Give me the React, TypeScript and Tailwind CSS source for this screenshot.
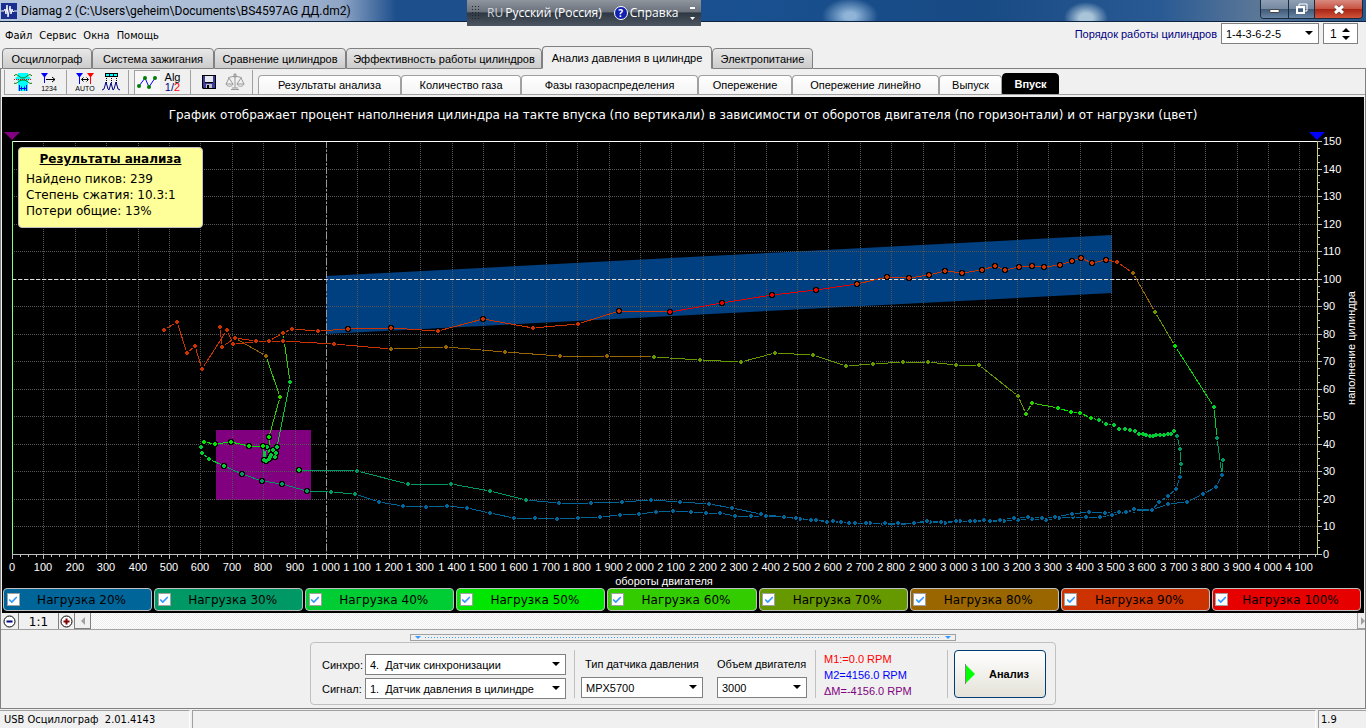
import { useState } from 'react'
import type { ReactNode } from 'react'
import { Check } from 'lucide-react'

type Point = [number, number]

interface Trace {
  color: string
  points: Point[]
}

// Load colours, 20% to 100%
const L20 = '#006699'
const L30 = '#009966'
const L40 = '#00cc33'
const L50 = '#00e600'
const L60 = '#33cc00'
const L70 = '#669900'
const L80 = '#996600'
const L90 = '#cc3300'
const L100 = '#e60000'

const loads = [
  { value: 20, bg: 'bg-[#006699]' },
  { value: 30, bg: 'bg-[#009966]' },
  { value: 40, bg: 'bg-[#00cc33]' },
  { value: 50, bg: 'bg-[#00e600]' },
  { value: 60, bg: 'bg-[#33cc00]' },
  { value: 70, bg: 'bg-[#669900]' },
  { value: 80, bg: 'bg-[#996600]' },
  { value: 90, bg: 'bg-[#cc3300]' },
  { value: 100, bg: 'bg-[#e60000]' },
]

// Neighbouring traces share a point, the later one gives it its colour
const traces: Trace[] = [
  { color: L60, points: [[266, 356], [280, 397], [269, 437]] },
  { color: L50, points: [[269, 437], [270, 458]] },
  { color: L80, points: [[235, 338], [266, 356]] },
  { color: L60, points: [[283, 333], [290, 382]] },
  { color: L40, points: [[290, 382], [277, 447], [270, 457], [267, 447], [264, 460], [263, 446], [266, 461], [273, 450], [276, 453], [271, 455], [275, 457], [269, 459]] },
  { color: L90, points: [[164, 330], [177, 322], [187, 353], [195, 346], [202, 369], [227, 330], [233, 344], [269, 341], [283, 333], [292, 329], [318, 331], [348, 329], [391, 328], [438, 331], [483, 319], [533, 328], [578, 324], [619, 311], [670, 312]] },
  { color: L100, points: [[670, 312], [722, 303], [772, 295], [816, 290], [857, 284]] },
  { color: L90, points: [[857, 284], [887, 277], [909, 278], [929, 275], [945, 271], [962, 273], [982, 270], [995, 266], [1005, 270], [1019, 267], [1032, 266], [1044, 267], [1060, 265], [1072, 261], [1081, 258], [1092, 263], [1106, 260], [1117, 262], [1133, 273]] },
  { color: L80, points: [[1133, 273], [1155, 312]] },
  { color: L70, points: [[1155, 312], [1175, 346]] },
  { color: L50, points: [[1175, 346], [1214, 407]] },
  { color: L40, points: [[1214, 407], [1217, 438]] },
  { color: L30, points: [[1217, 438], [1222, 475], [1223, 460]] },
  { color: L20, points: [[1222, 475], [1216, 487], [1203, 494], [1187, 502], [1168, 504], [1152, 510], [1134, 511], [1112, 515], [1100, 517], [1086, 517], [1073, 517], [1059, 518], [1046, 520], [1032, 519], [1018, 520], [1004, 521], [990, 521], [975, 521], [960, 521], [945, 523], [930, 522], [914, 523], [898, 525], [883, 524], [870, 523], [855, 523], [841, 522], [827, 522], [816, 520], [800, 519], [784, 517], [761, 514], [732, 508], [709, 504], [680, 502], [651, 500], [622, 502], [591, 503], [559, 503], [526, 500]] },
  { color: L30, points: [[526, 500], [490, 491], [451, 484], [408, 484], [357, 471], [299, 470]] },
  { color: L40, points: [[299, 470]] },
  { color: L90, points: [[220, 327], [222, 347], [235, 338], [256, 341], [283, 341], [334, 344], [391, 349]] },
  { color: L80, points: [[391, 349], [446, 347], [505, 352], [560, 356], [607, 356], [654, 357]] },
  { color: L70, points: [[654, 357], [700, 360], [741, 362], [775, 353], [813, 355], [846, 366], [873, 364], [903, 362], [928, 362], [956, 365], [979, 365], [1018, 396], [1026, 414]] },
  { color: L60, points: [[1026, 414], [1032, 403], [1058, 408]] },
  { color: L50, points: [[1058, 408], [1071, 412], [1080, 413], [1091, 418], [1099, 420]] },
  { color: L40, points: [[1099, 420], [1106, 424], [1114, 425], [1119, 429], [1125, 429], [1130, 430], [1135, 431], [1139, 434], [1143, 434], [1146, 435], [1150, 436], [1153, 436], [1156, 435], [1160, 435], [1164, 435], [1168, 434], [1171, 434], [1174, 431], [1177, 436]] },
  { color: L30, points: [[1177, 436], [1180, 449], [1181, 464], [1180, 477]] },
  { color: L20, points: [[1180, 477], [1176, 489], [1168, 496], [1159, 502], [1152, 510], [1134, 509], [1126, 512], [1119, 512], [1105, 513], [1089, 512], [1072, 514], [1055, 517], [1042, 518], [1028, 517], [1014, 518], [1000, 520], [984, 520], [970, 521], [956, 521], [941, 522], [927, 521], [914, 523], [898, 523], [885, 523], [866, 523], [849, 523], [833, 521], [811, 520], [796, 518], [784, 517], [766, 516], [751, 516], [735, 516], [720, 513], [706, 513], [691, 512], [673, 511], [656, 512], [639, 514], [620, 515], [600, 517], [578, 518], [557, 519], [535, 518], [514, 518], [490, 513], [467, 508], [447, 506], [426, 507], [403, 506], [379, 502], [355, 494]] },
  { color: L30, points: [[355, 494], [331, 492], [307, 491], [282, 484], [262, 481], [242, 474], [224, 466]] },
  { color: L40, points: [[224, 466], [209, 459], [202, 453], [201, 447], [204, 442]] },
  { color: L50, points: [[204, 442], [215, 444], [231, 442], [249, 446], [263, 446]] },
]

const X0 = 12
const X1 = 1317
const Y0 = 554
const Y1 = 141
const MAX_RPM = 4156

const xOf = (rpm: number) => Math.round(X0 + (rpm / MAX_RPM) * (X1 - X0))
const yOf = (percent: number) => Math.round(Y0 - (percent / 150) * (Y0 - Y1))
const range = (count: number) => Array.from({ length: count }, (_, i) => i)
const rpmLabel = (rpm: number) =>
  rpm < 1000 ? String(rpm) : `${Math.floor(rpm / 1000)} ${String(rpm % 1000).padStart(3, '0')}`

function Chart() {
  return (
    <svg viewBox="2 131 1362 457" className="block h-auto w-full font-['Liberation_Sans',sans-serif] text-[11px]">
      {/* Reference areas */}
      <polygon points="326,276 1112,235 1112,293 326,334" fill="#004080" />
      <rect x="216" y="430" width="95" height="70" fill="#800080" />

      {/* Grid */}
      <g stroke="#555555" strokeDasharray="1 1" shapeRendering="crispEdges">
        {range(41).map(i => (
          <line key={i} x1={xOf((i + 1) * 100) + 0.5} x2={xOf((i + 1) * 100) + 0.5} y1={Y1} y2={Y0} />
        ))}
        {range(14).map(i => (
          <line key={i} x1={X0} x2={X1} y1={yOf((i + 1) * 10) + 0.5} y2={yOf((i + 1) * 10) + 0.5} />
        ))}
      </g>
      <g fill="none" shapeRendering="crispEdges">
        <path d={`M326.5 ${Y1}V${Y0}`} stroke="#999999" strokeDasharray="7 2 2 2" />
        <path d={`M${X0} 279.5H${X1}`} stroke="#e0e0e0" strokeDasharray="4 2" />
        <path d={`M${X0} 141.5H1322`} stroke="#ffffff" />
        <path d={`M${X0} 554.5H1322`} stroke="#c0c0c0" />
        <path d={`M12.5 ${Y1}V${Y0}`} stroke="#80ff80" />
        <path d={`M1317.5 ${Y1}V${Y0}`} stroke="#d0d060" />
      </g>

      {/* Ticks */}
      <g stroke="#c0c0c0" shapeRendering="crispEdges">
        {range(167).map(i => (
          <line key={i} x1={xOf(i * 25) + 0.5} x2={xOf(i * 25) + 0.5} y1={Y0} y2={i % 4 ? Y0 + 3 : Y0 + 5} />
        ))}
        {range(61).map(i => (
          <line key={i} x1={X1} x2={i % 4 ? X1 + 3 : X1 + 5} y1={yOf(i * 2.5) + 0.5} y2={yOf(i * 2.5) + 0.5} />
        ))}
      </g>

      {/* Markers */}
      <polygon points="4,132 20,132 12,140" fill="#800080" />
      <polygon points="1309,132 1325,132 1317,140" fill="#0000ff" />

      {/* Measured curves */}
      <g fill="none" shapeRendering="crispEdges">
        {traces.map((trace, i) => (
          <polyline key={i} points={trace.points.map(p => p.join(',')).join(' ')} stroke={trace.color} />
        ))}
      </g>
      <g stroke="#000000" strokeWidth="2" paintOrder="stroke" shapeRendering="crispEdges">
        {traces.map((trace, i) => (
          <path
            key={i}
            fill={trace.color}
            d={trace.points.map(([x, y]) => `M${x - 1} ${y - 2}h2v1h1v2h-1v1h-2v-1h-1v-2h1z`).join('')}
          />
        ))}
      </g>

      {/* Labels */}
      <g fill="#ffffff">
        {range(42).map(i => (
          <text key={i} x={xOf(i * 100)} y="571" textAnchor="middle">{rpmLabel(i * 100)}</text>
        ))}
        {range(16).map(i => (
          <text key={i} x="1323" y={yOf(i * 10) + 4}>{i * 10}</text>
        ))}
        <text x="664" y="585" textAnchor="middle">обороты двигателя</text>
        <text transform="translate(1355 348) rotate(-90)" textAnchor="middle">наполнение цилиндра</text>
      </g>
    </svg>
  )
}

function AppIcon() {
  return (
    <svg width="16" height="16" viewBox="0 0 16 16">
      <rect width="16" height="16" fill="#1a2f8f" />
      <path d="M0 8h3l1-2 1 5 1-9 1 12 2-11 1 8 1-5 1 3 1-1h3" fill="none" stroke="#ffffff" />
    </svg>
  )
}

function FilterIcon() {
  return (
    <svg width="20" height="20" viewBox="0 0 20 20" fill="none">
      <path d="M5 1h10v3l3 2-3 3v10H5V9L2 6l3-2z" fill="#00ffff" />
      <path d="M1 4c3-4 5 2 9 2s6-6 9-2M1 11c3 2 4-3 9-3s6 5 9 3" stroke="#008000" />
      <path d="M1 7.500h18" stroke="#ff0000" strokeDasharray="1 1" />
      <path d="M6.500 13v6M13.500 13v6" stroke="#0000ff" />
      <path d="M7 16.500h6M8.500 14.500v4M11.500 14.500v4" stroke="#0000ff" />
    </svg>
  )
}

function NumberIcon() {
  return (
    <svg width="20" height="20" viewBox="0 0 20 20" fill="none">
      <path d="M2 1h7L6 5v6H5V5z" fill="#0000ff" />
      <path d="M7 7.500h9M13 5l3 2.500-3 2.500" stroke="#000000" />
      <text x="10" y="19" textAnchor="middle" fill="#000000" className="font-['Liberation_Sans',sans-serif] text-[7px]">1234</text>
    </svg>
  )
}

function AutoIcon() {
  return (
    <svg width="20" height="20" viewBox="0 0 20 20" fill="none">
      <path d="M1 1h7L5 5v7H4V5z" fill="#0000ff" />
      <path d="M12 1h7l-3 4v7h-1V5z" fill="#ff0000" />
      <path d="M7 7.500h6M8.500 5.500l-2 2 2 2M11.500 5.500l2 2-2 2" stroke="#000000" />
      <text x="10" y="19" textAnchor="middle" fill="#000000" className="font-['Liberation_Sans',sans-serif] text-[7px]">AUTO</text>
    </svg>
  )
}

function PeaksIcon() {
  return (
    <svg width="20" height="20" viewBox="0 0 20 20" fill="none">
      <rect x="4.500" y="1.500" width="12" height="3" fill="#00ffff" stroke="#000000" />
      <path d="M8.500 1v4M12.500 1v4" stroke="#000000" />
      <path d="M5.500 6v5M10.500 6v5M15.500 6v5" stroke="#000000" strokeDasharray="1 1" />
      <path d="M1 18l2-1 2-7 2 7 1 1 2-7 2 7 1-1 2-7 2 7 2 1" stroke="#000080" />
    </svg>
  )
}

function PointsIcon() {
  return (
    <svg width="22" height="20" viewBox="0 0 22 20" fill="#008000">
      <path d="M3 14L9 6l4 9 6-9" fill="none" stroke="#0000ff" />
      <circle cx="3" cy="14" r="2" />
      <circle cx="9" cy="6" r="2" />
      <circle cx="13" cy="15" r="2" />
      <circle cx="19" cy="6" r="2" />
    </svg>
  )
}

function AlgorithmIcon() {
  return (
    <span className="flex flex-col text-center font-['Liberation_Sans',sans-serif] text-[11px] leading-[10px]">
      <span>Alg</span>
      <span><span className="text-[#000080]">1/</span><span className="text-[#ff0000]">2</span></span>
    </span>
  )
}

function SaveIcon() {
  return (
    <svg width="14" height="14" viewBox="0 0 14 14">
      <path d="M0 0h14v14H1l-1-1z" fill="#000000" />
      <path d="M1 1h2v7h8V1h2v12H2l-1-1z" fill="#3c3c9c" />
      <rect x="3" y="1" width="8" height="6" fill="#e8e8f0" />
      <rect x="4" y="9" width="6" height="4" fill="#c0c0c0" />
      <rect x="5" y="10" width="2" height="3" fill="#000000" />
    </svg>
  )
}

function ScalesIcon() {
  return (
    <svg width="20" height="18" viewBox="0 0 20 18" fill="none" stroke="#999999">
      <path d="M10 1v14M9 1h2v3H9zM3 5c3-2 11-2 14 0M4 5L1 11h7zM16 5l-4 6h7zM1 11c1 3 6 3 7 0M12 11c1 3 6 3 7 0M6 16.500h8M7 15h6" />
    </svg>
  )
}

function ToolButton({ title, pressed, children }: { title: string; pressed?: boolean; children: ReactNode }) {
  return (
    <button
      title={title}
      className={`flex h-6 w-[26px] items-center justify-center ${pressed ? 'border-t border-l border-[#a0a0a0] bg-[#f8f8f8]' : ''}`}
    >
      {children}
    </button>
  )
}

function ToolSeparator() {
  return <div className="h-6 w-px bg-[#a0a0a0]" />
}

function ToolGroup({ children }: { children: ReactNode }) {
  return <div className="flex w-[61px] justify-center">{children}</div>
}

interface SelectProps {
  id: string
  label: string
  value: string
  className: string
}

function SelectBox({ id, label, value, className }: SelectProps) {
  return (
    <div className={`relative ${className}`}>
      <select
        id={id}
        aria-label={label}
        className="block h-[21px] w-full appearance-none border border-[#808080] bg-white pl-1 text-black"
      >
        <option>{value}</option>
      </select>
      <svg width="8" height="4" viewBox="0 0 8 4" className="pointer-events-none absolute top-2 right-1.5">
        <polygon points="0,0 8,0 4,4" />
      </svg>
    </div>
  )
}

function TitleBar() {
  return (
    <header className="relative flex h-[22px] items-center border-b border-[#0d2440] bg-[radial-gradient(22px_16px_at_1086px_18px,#a9c4d8_30%,transparent),radial-gradient(28px_18px_at_850px_16px,#8fb4d8_20%,transparent),linear-gradient(90deg,#b5c5dc_0,#a9bad4_20%,#8fa5c6_25%,#1d4f8c_29%,#19508f_55%,#184a84_72%,#2a5a94_85%,#5b7797_92%,#27578c_100%)]">
      <div className="flex h-full w-[466px] items-center pl-px">
        <AppIcon />
        <h1 className="pl-1 font-['Roboto',sans-serif] text-[12px] whitespace-nowrap text-black">
          Diamag 2 (C:\Users\geheim\Documents\BS4597AG ДД.dm2)
        </h1>
      </div>

      {/* Language bar floats over the window */}
      <div className="absolute top-0 left-[467px] z-10 flex h-[26px] w-[234px] items-center bg-[linear-gradient(#8f959d_0,#6b727c_45%,#2e3843_50%,#4d5660_100%)] pl-1 font-['Open_Sans',sans-serif] text-[12px] text-white">
        <div className="mr-2 h-4 w-2 bg-[radial-gradient(#20262d_1px,transparent_1px)] bg-[length:3px_3px]" />
        <span className="text-[#d0d4d8]">RU</span>
        <span className="ml-0.5 font-medium whitespace-nowrap">Русский (Россия)</span>
        <button className="ml-3 flex items-center gap-0.5 font-medium">
          <span className="flex size-[14px] items-center justify-center rounded-full border border-white bg-[#1020b0] text-[10px] font-bold">?</span>
          Справка
        </button>
        <button title="Параметры" className="mr-1.5 ml-auto flex flex-col items-center gap-2">
          <span className="h-0.5 w-[5px] bg-white" />
          <svg width="5" height="3" viewBox="0 0 5 3"><polygon points="0,0 5,0 2.500,3" fill="#ffffff" /></svg>
        </button>
      </div>

      <div className="mr-[3px] ml-auto flex h-[19px] self-start overflow-hidden rounded-b border border-t-0 border-[#1b2b3f]">
        <button title="Свернуть" className="flex w-7 items-center justify-center border-r border-[#1b2b3f] bg-[linear-gradient(#8fa0b4_0,#7488a0_50%,#3f5874_50%,#6885a5_100%)]">
          <span className="mt-1 h-1 w-[11px] rounded-sm border border-[#444] bg-white" />
        </button>
        <button title="Развернуть" className="flex w-[26px] items-center justify-center border-r border-[#1b2b3f] bg-[linear-gradient(#8fa0b4_0,#7488a0_50%,#3f5874_50%,#6885a5_100%)]">
          <svg width="13" height="12" viewBox="0 0 13 12" fill="none" stroke="#ffffff" strokeWidth="2">
            <path d="M4 3V1h8v7h-2" strokeWidth="1" />
            <rect x="2" y="4" width="7" height="6" />
          </svg>
        </button>
        <button title="Закрыть" className="flex w-[47px] items-center justify-center bg-[linear-gradient(#d98a80_0,#c8503f_50%,#a82414_50%,#d0533a_100%)]">
          <svg width="12" height="11" viewBox="0 0 12 11">
            <path d="M2 2l8 7M10 2l-8 7" stroke="#43302c" strokeWidth="4" />
            <path d="M2 2l8 7M10 2l-8 7" stroke="#ffffff" strokeWidth="3" />
          </svg>
        </button>
      </div>
    </header>
  )
}

function MenuRow() {
  return (
    <div className="flex h-6 items-start justify-between pr-2">
      <nav className="flex gap-[7px] pt-1.5 pl-[5px] font-['DejaVu_Sans_Condensed','DejaVu_Sans',sans-serif] text-[11px] leading-4">
        <button>Файл</button>
        <button>Сервис</button>
        <button>Окна</button>
        <button>Помощь</button>
      </nav>
      <div className="flex items-center gap-1 pt-px">
        <label htmlFor="order" className="text-[#000080]">Порядок работы цилиндров</label>
        <SelectBox id="order" label="Порядок работы цилиндров" value="1-4-3-6-2-5" className="w-[98px]" />
        <div className="flex h-[21px] w-[35px] items-center border border-[#808080] bg-white">
          <input aria-label="Цилиндр" defaultValue="1" className="w-[18px] pl-1.5 text-[12px]" />
          <div className="flex flex-col gap-1">
            <button title="Больше"><svg width="8" height="4" viewBox="0 0 8 4" className="block"><polygon points="0,4 8,4 4,0" /></svg></button>
            <button title="Меньше"><svg width="8" height="4" viewBox="0 0 8 4" className="block"><polygon points="0,0 8,0 4,4" /></svg></button>
          </div>
        </div>
      </div>
    </div>
  )
}

const mainTabs = [
  { name: 'Осциллограф', width: 'w-[90px]' },
  { name: 'Система зажигания', width: 'w-[122px]' },
  { name: 'Сравнение цилиндров', width: 'w-[132px]' },
  { name: 'Эффективность работы цилиндров', width: 'w-[196px]' },
  { name: 'Анализ давления в цилиндре', width: 'w-[170px]' },
  { name: 'Электропитание', width: 'w-[101px]' },
]

const reportTabs = [
  { name: 'Результаты анализа', width: 'w-[143px]' },
  { name: 'Количество газа', width: 'w-[120px]' },
  { name: 'Фазы газораспределения', width: 'w-[177px]' },
  { name: 'Опережение', width: 'w-[94px]' },
  { name: 'Опережение линейно', width: 'w-[147px]' },
  { name: 'Выпуск', width: 'w-[63px]' },
  { name: 'Впуск', width: 'w-[57px]' },
]

function MainTabs() {
  const [active, setActive] = useState('Анализ давления в цилиндре')

  return (
    <div role="tablist" className="flex h-[23px] items-end">
      <div className="w-0.5 self-stretch border-b border-[#808080]" />
      {mainTabs.map(tab => (
        <button
          key={tab.name}
          role="tab"
          aria-selected={tab.name === active}
          onClick={() => setActive(tab.name)}
          className={`rounded-t-sm border border-[#808080] whitespace-nowrap ${tab.width} ${
            tab.name === active ? 'h-[23px] border-b-transparent bg-[#f0f0f0]' : 'h-[21px] bg-linear-to-b from-[#e8e8e8] to-[#cccccc]'
          }`}
        >
          {tab.name}
        </button>
      ))}
      <div className="flex-1 self-stretch border-b border-[#808080]" />
    </div>
  )
}

function ReportTabs() {
  const [active, setActive] = useState('Впуск')

  return (
    <div role="tablist" className="flex h-[26px] flex-1 items-end border-b border-[#a0a0a0]">
      {reportTabs.map(tab => (
        <button
          key={tab.name}
          role="tab"
          aria-selected={tab.name === active}
          onClick={() => setActive(tab.name)}
          className={`rounded-t-sm whitespace-nowrap ${tab.width} ${
            tab.name === active
              ? 'h-[21px] border border-black bg-black font-bold text-white'
              : 'h-[19px] border border-b-0 border-[#a0a0a0] bg-linear-to-b from-white to-[#f4f4f4]'
          }`}
        >
          {tab.name}
        </button>
      ))}
    </div>
  )
}

function Toolbar() {
  return (
    <div className="flex h-7 items-start pl-[3px]">
      <div className="flex h-[26px] items-center border-b border-[#a0a0a0] pr-[5px]">
        <ToolSeparator />
        <ToolGroup>
          <ToolButton title="Фильтр"><FilterIcon /></ToolButton>
          <ToolButton title="Нумерация"><NumberIcon /></ToolButton>
        </ToolGroup>
        <ToolSeparator />
        <ToolGroup>
          <ToolButton title="Авто"><AutoIcon /></ToolButton>
          <ToolButton title="Пики"><PeaksIcon /></ToolButton>
        </ToolGroup>
        <ToolSeparator />
        <ToolGroup>
          <ToolButton title="Точки" pressed><PointsIcon /></ToolButton>
          <ToolButton title="Алгоритм"><AlgorithmIcon /></ToolButton>
        </ToolGroup>
        <ToolSeparator />
        <ToolGroup>
          <ToolButton title="Сохранить"><SaveIcon /></ToolButton>
          <ToolButton title="Баланс"><ScalesIcon /></ToolButton>
        </ToolGroup>
        <ToolSeparator />
      </div>
      <ReportTabs />
    </div>
  )
}

function Legend() {
  return (
    <div className="grid grid-cols-9 gap-0.5 pr-[3px] pb-0.5 pl-px font-['DejaVu_Sans',sans-serif] text-[12px]">
      {loads.map(load => (
        <label
          key={load.value}
          className={`flex h-[23px] items-center rounded border border-[#c0c0c0] pr-2 pl-0.5 text-black ${load.bg}`}
        >
          <span className="grid size-[14px] place-items-center *:col-start-1 *:row-start-1">
            <input type="checkbox" defaultChecked className="peer size-[13px] appearance-none border border-[#a0a0a0] bg-white" />
            <Check size={10} strokeWidth={4} className="pointer-events-none hidden text-[#3399ff] peer-checked:block" />
          </span>
          <span className="flex-1 text-center">Нагрузка {load.value}%</span>
        </label>
      ))}
    </div>
  )
}

function ScrollRow() {
  return (
    <div className="flex h-[17px] items-stretch border-b border-[#a0a0a0] bg-[repeating-conic-gradient(#ffffff_0_25%,#ececec_0_50%)] bg-[length:2px_2px]">
      <button title="Уменьшить" className="flex w-[18px] items-center justify-center border-r border-[#808080] bg-[#f0f0f0]">
        <svg width="13" height="13" viewBox="0 0 13 13"><circle cx="6.500" cy="6.500" r="5.500" fill="#ffffff" stroke="#000000" /><path d="M3.500 6.500h6" stroke="#000080" strokeWidth="2" /></svg>
      </button>
      <button className="w-10 border-r border-[#808080] bg-[#f0f0f0] pt-px font-['DejaVu_Sans',sans-serif] text-[12px] leading-4">1:1</button>
      <button title="Увеличить" className="flex w-4 items-center justify-center border-r border-[#808080] bg-[#f0f0f0]">
        <svg width="13" height="13" viewBox="0 0 13 13"><circle cx="6.500" cy="6.500" r="5.500" fill="#ffffff" stroke="#000000" /><path d="M3.500 6.500h6M6.500 3.500v6" stroke="#800000" strokeWidth="2" /></svg>
      </button>
      <button title="Влево" className="flex w-4 items-center justify-center border-r border-b border-[#808080] bg-[#f0f0f0]">
        <svg width="4" height="8" viewBox="0 0 4 8"><polygon points="4,0 4,8 0,4" fill="#a0a0a0" /></svg>
      </button>
      <button title="Вправо" className="ml-auto flex w-2 items-center justify-end border-b border-l border-[#a0a0a0] bg-[#f0f0f0]">
        <svg width="4" height="8" viewBox="0 0 4 8"><polygon points="0,0 0,8 4,4" fill="#a0a0a0" /></svg>
      </button>
    </div>
  )
}

function Splitter() {
  return (
    <div className="mx-auto mt-1 flex h-[7px] w-[546px] items-center gap-1 border border-[#a0a0a0] px-1">
      <svg width="6" height="3" viewBox="0 0 6 3"><polygon points="0,0 6,0 3,3" fill="#3399ff" /></svg>
      <div className="h-px flex-1 bg-[repeating-linear-gradient(90deg,#3399ff_0_1px,transparent_1px_3px)]" />
      <svg width="6" height="3" viewBox="0 0 6 3"><polygon points="0,0 6,0 3,3" fill="#3399ff" /></svg>
    </div>
  )
}

function ControlPanel() {
  return (
    <div className="mx-auto mt-px flex h-[63px] w-[746px] items-center rounded border border-[#c0c0c0] pl-[11px]">
      <div className="mt-1.5 grid grid-cols-[43px_201px] items-center gap-y-[3px]">
        <label htmlFor="sync">Синхро:</label>
        <SelectBox id="sync" label="Синхро" value={'4.\u00a0 Датчик синхронизации'} className="w-full" />
        <label htmlFor="signal">Сигнал:</label>
        <SelectBox id="signal" label="Сигнал" value={'1.\u00a0 Датчик давления в цилиндре'} className="w-full" />
      </div>
      <div className="mr-1.5 ml-2 h-12 w-px bg-[#c0c0c0]" />
      <div className="mt-2 flex w-[122px] flex-col gap-1.5">
        <label htmlFor="sensor" className="pl-1 whitespace-nowrap">Тип датчика давления</label>
        <SelectBox id="sensor" label="Тип датчика давления" value="MPX5700" className="w-full" />
      </div>
      <div className="mt-2 ml-3.5 flex w-[90px] flex-col gap-1.5">
        <label htmlFor="volume" className="whitespace-nowrap">Объем двигателя</label>
        <SelectBox id="volume" label="Объем двигателя" value="3000" className="w-full" />
      </div>
      <div className="mx-2 h-12 w-px bg-[#c0c0c0]" />
      <div className="mt-0.5 w-[123px] leading-4">
        <p className="text-[#ff0000]">M1:=0.0 RPM</p>
        <p className="text-[#0000ff]">M2=4156.0 RPM</p>
        <p className="text-[#800080]">ΔM=-4156.0 RPM</p>
      </div>
      <div className="mr-1.5 h-12 w-px bg-[#c0c0c0]" />
      <button className="flex h-12 w-[92px] items-center gap-3.5 rounded-sm border border-[#003c74] bg-linear-to-b from-white to-[#e4e2d8] pl-2.5 font-bold">
        <svg width="10" height="20" viewBox="0 0 10 20"><polygon points="0,0 10,10 0,20" fill="#00ff00" /><path d="M.5 0v20" stroke="#808080" /></svg>
        Анализ
      </button>
    </div>
  )
}

function StatusBar() {
  return (
    <footer className="mt-px flex h-[18px] gap-0.5 font-['DejaVu_Sans_Condensed','DejaVu_Sans',sans-serif] text-[11px] leading-[18px]">
      <p className="w-[190px] border-t border-r border-t-[#a0a0a0] border-r-white pl-1 whitespace-pre">USB Осциллограф  2.01.4143</p>
      <p className="flex-1 border-t border-r border-l border-[#a0a0a0] border-r-white" />
      <p className="w-12 border-t border-l border-[#a0a0a0] pl-0.5">1.9</p>
    </footer>
  )
}

export default function App() {
  return (
    <div className="flex min-h-screen flex-col bg-[#f0f0f0] font-['Liberation_Sans',sans-serif] text-[11px] leading-[14px] text-black">
      <TitleBar />
      <MenuRow />
      <MainTabs />
      <main className="flex-1 border-x border-b border-[#808080]">
        <Toolbar />
        <section className="relative mx-px bg-black">
          <h2 className="h-[34px] pt-[10px] text-center font-['DejaVu_Sans',sans-serif] text-[12px] leading-4 text-white">
            График отображает процент наполнения цилиндра на такте впуска (по вертикали) в зависимости от оборотов двигателя (по горизонтали) и от нагрузки (цвет)
          </h2>
          <Chart />
          <Legend />
          {/* Analysis note */}
          <div className="absolute top-[50px] left-4 h-[81px] w-[185px] rounded-sm border border-[#c0c0c0] bg-[#ffff99] px-[7px] pt-[3px] font-['DejaVu_Sans',sans-serif] text-[12px] leading-4">
            <h3 className="mb-1 text-center font-bold underline">Результаты анализа</h3>
            <p>Найдено пиков: 239</p>
            <p>Степень сжатия: 10.3:1</p>
            <p>Потери общие: 13%</p>
          </div>
        </section>
        <ScrollRow />
        <Splitter />
        <ControlPanel />
      </main>
      <StatusBar />
    </div>
  )
}
